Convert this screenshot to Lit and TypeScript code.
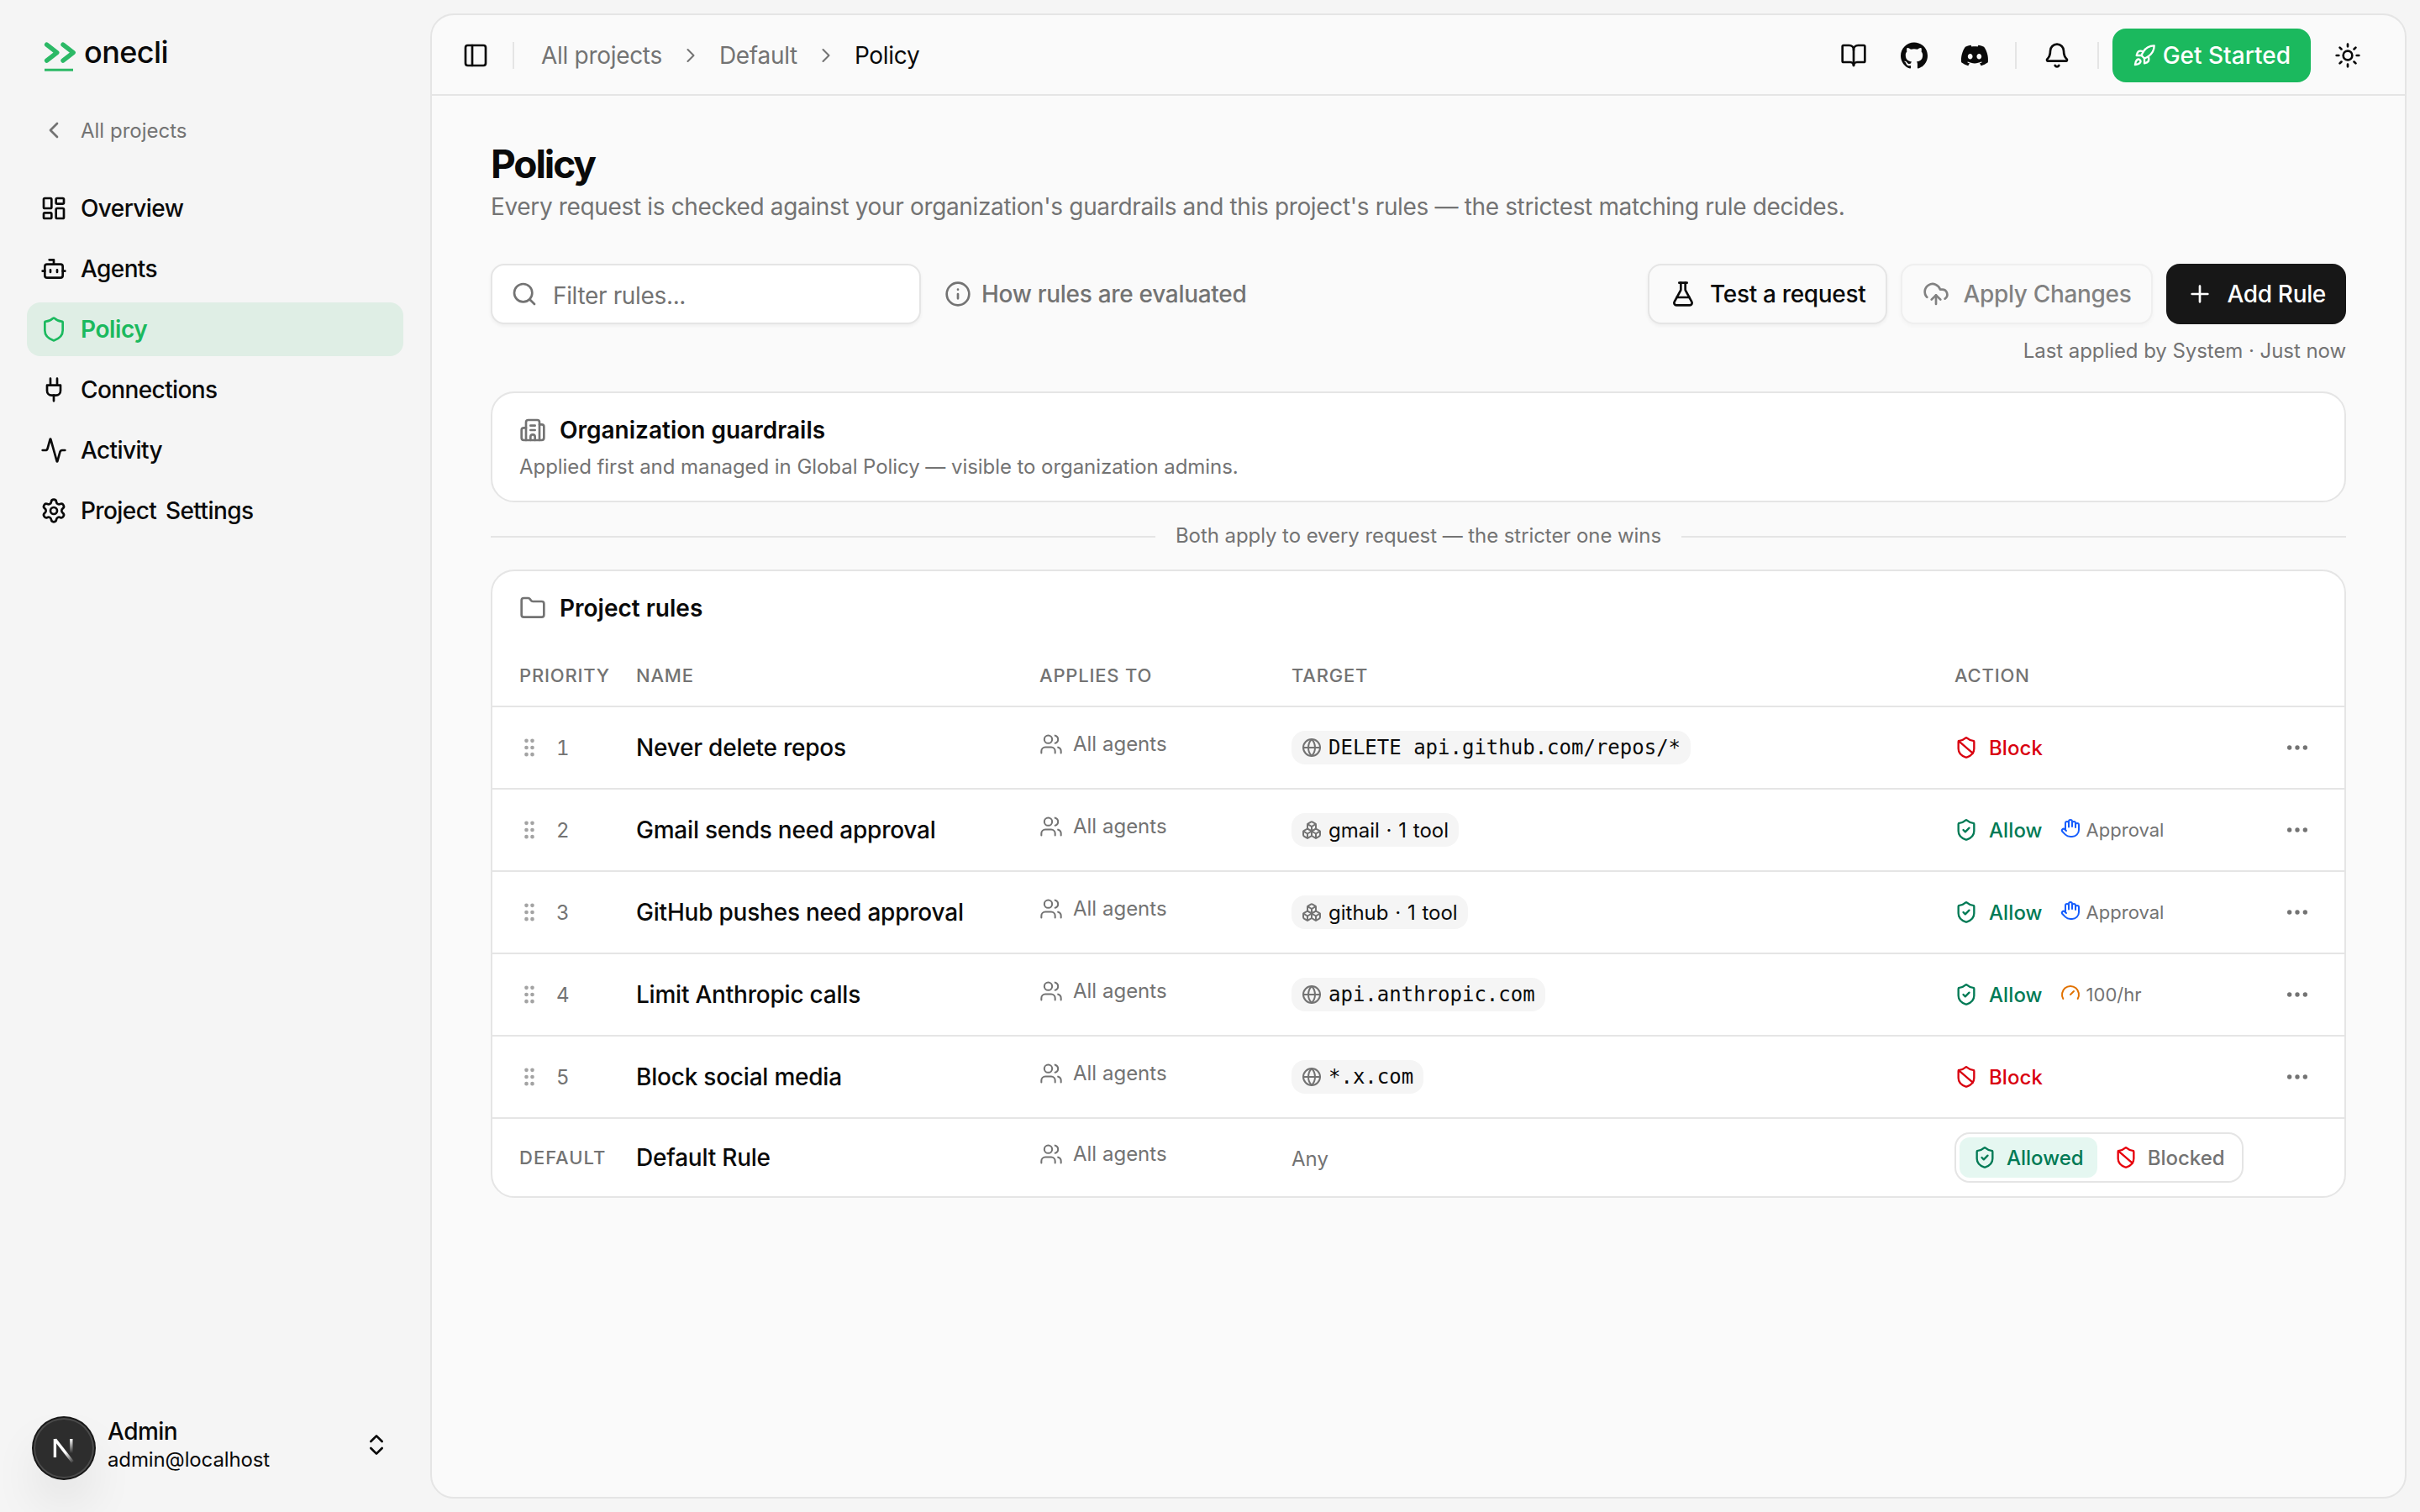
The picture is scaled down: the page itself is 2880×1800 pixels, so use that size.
import { LitElement, html, css, svg, nothing } from 'lit';
import { customElement, property } from 'lit/decorators.js';

const SHIELD = svg`<path d="M20 13c0 5-3.5 7.5-7.66 8.95a1 1 0 0 1-.67-.01C7.5 20.5 4 18 4 13V6a1 1 0 0 1 1-1c2 0 4.5-1.2 6.24-2.72a1.17 1.17 0 0 1 1.52 0C14.51 3.81 17 5 19 5a1 1 0 0 1 1 1z"/>`;

// stroked icons, 24x24 grid
const ICONS: Record<string, unknown> = {
  'chevron-left': svg`<path d="m15 18-6-6 6-6"/>`,
  'chevron-right': svg`<path d="m9 18 6-6-6-6"/>`,
  'chevrons': svg`<path d="m7 15 5 5 5-5"/><path d="m7 9 5-5 5 5"/>`,
  'dashboard': svg`<rect width="7" height="9" x="3" y="3" rx="1"/><rect width="7" height="5" x="14" y="3" rx="1"/><rect width="7" height="9" x="14" y="12" rx="1"/><rect width="7" height="5" x="3" y="16" rx="1"/>`,
  'bot': svg`<path d="M12 8V4H8"/><rect width="16" height="12" x="4" y="8" rx="2"/><path d="M2 14h2M20 14h2M15 13v2M9 13v2"/>`,
  'shield': SHIELD,
  'shield-ban': svg`${SHIELD}<path d="m4.243 5.21 14.39 12.472"/>`,
  'shield-check': svg`${SHIELD}<path d="m9 12 2 2 4-4"/>`,
  'plug': svg`<path d="M12 22v-5M9 8V2M15 8V2"/><path d="M18 8v5a4 4 0 0 1-4 4h-4a4 4 0 0 1-4-4V8Z"/>`,
  'activity': svg`<path d="M22 12h-2.48a2 2 0 0 0-1.93 1.46l-2.35 8.36a.25.25 0 0 1-.48 0L9.24 2.18a.25.25 0 0 0-.48 0l-2.35 8.36A2 2 0 0 1 4.49 12H2"/>`,
  'settings': svg`<path d="M9.671 4.136a2.34 2.34 0 0 1 4.659 0 2.34 2.34 0 0 0 3.319 1.915 2.34 2.34 0 0 1 2.33 4.033 2.34 2.34 0 0 0 0 3.831 2.34 2.34 0 0 1-2.33 4.033 2.34 2.34 0 0 0-3.319 1.915 2.34 2.34 0 0 1-4.659 0 2.34 2.34 0 0 0-3.32-1.915 2.34 2.34 0 0 1-2.33-4.033 2.34 2.34 0 0 0 0-3.831A2.34 2.34 0 0 1 6.35 6.051a2.34 2.34 0 0 0 3.319-1.915"/><circle cx="12" cy="12" r="3"/>`,
  'panel': svg`<rect width="18" height="18" x="3" y="3" rx="2"/><path d="M9 3v18"/>`,
  'book': svg`<path d="M12 7v14"/><path d="M3 18a1 1 0 0 1-1-1V4a1 1 0 0 1 1-1h5a4 4 0 0 1 4 4 4 4 0 0 1 4-4h5a1 1 0 0 1 1 1v13a1 1 0 0 1-1 1h-6a3 3 0 0 0-3 3 3 3 0 0 0-3-3z"/>`,
  'bell': svg`<path d="M10.268 21a2 2 0 0 0 3.464 0"/><path d="M3.262 15.326A1 1 0 0 0 4 17h16a1 1 0 0 0 .74-1.673C19.41 13.956 18 12.499 18 8A6 6 0 0 0 6 8c0 4.499-1.411 5.956-2.738 7.326"/>`,
  'rocket': svg`<path d="M4.5 16.5c-1.5 1.26-2 5-2 5s3.74-.5 5-2c.71-.84.7-2.13-.09-2.91a2.18 2.18 0 0 0-2.91-.09z"/><path d="m12 15-3-3a22 22 0 0 1 2-3.95A12.88 12.88 0 0 1 22 2c0 2.72-.78 7.5-6 11a22.35 22.35 0 0 1-4 2z"/><path d="M9 12H4s.55-3.03 2-4c1.62-1.08 5 0 5 0"/><path d="M12 15v5s3.03-.55 4-2c1.08-1.62 0-5 0-5"/>`,
  'sun': svg`<circle cx="12" cy="12" r="4"/><path d="M12 2v2M12 20v2M4.93 4.93l1.41 1.41M17.66 17.66l1.41 1.41M2 12h2M20 12h2M6.34 17.66l-1.41 1.41M19.07 4.93l-1.41 1.41"/>`,
  'search': svg`<path d="m21 21-4.34-4.34"/><circle cx="11" cy="11" r="8"/>`,
  'info': svg`<circle cx="12" cy="12" r="10"/><path d="M12 16v-4M12 8h.01"/>`,
  'flask': svg`<path d="M14 2v6a2 2 0 0 0 .245.96l5.51 10.08A2 2 0 0 1 18 22H6a2 2 0 0 1-1.755-2.96l5.51-10.08A2 2 0 0 0 10 8V2"/><path d="M6.453 15h11.094M8.5 2h7"/>`,
  'cloud-up': svg`<path d="M12 13v8"/><path d="M4 14.899A7 7 0 1 1 15.71 8h1.79a4.5 4.5 0 0 1 2.5 8.242"/><path d="m8 17 4-4 4 4"/>`,
  'plus': svg`<path d="M5 12h14M12 5v14"/>`,
  'building': svg`<path d="M10 12h4M10 8h4"/><path d="M14 21v-3a2 2 0 0 0-4 0v3"/><path d="M6 10H4a2 2 0 0 0-2 2v7a2 2 0 0 0 2 2h16a2 2 0 0 0 2-2V9a2 2 0 0 0-2-2h-2"/><path d="M6 21V5a2 2 0 0 1 2-2h8a2 2 0 0 1 2 2v16"/>`,
  'folder': svg`<path d="M20 20a2 2 0 0 0 2-2V8a2 2 0 0 0-2-2h-7.9a2 2 0 0 1-1.69-.9L9.6 3.9A2 2 0 0 0 7.93 3H4a2 2 0 0 0-2 2v13a2 2 0 0 0 2 2Z"/>`,
  'grip': svg`<circle cx="9" cy="12" r="1"/><circle cx="9" cy="5" r="1"/><circle cx="9" cy="19" r="1"/><circle cx="15" cy="12" r="1"/><circle cx="15" cy="5" r="1"/><circle cx="15" cy="19" r="1"/>`,
  'users': svg`<path d="M16 21v-2a4 4 0 0 0-4-4H6a4 4 0 0 0-4 4v2"/><path d="M16 3.128a4 4 0 0 1 0 7.744"/><path d="M22 21v-2a4 4 0 0 0-3-3.87"/><circle cx="9" cy="7" r="4"/>`,
  'globe': svg`<circle cx="12" cy="12" r="10"/><path d="M12 2a14.5 14.5 0 0 0 0 20 14.5 14.5 0 0 0 0-20"/><path d="M2 12h20"/>`,
  'boxes': svg`<path d="M2.97 12.92A2 2 0 0 0 2 14.63v3.24a2 2 0 0 0 .97 1.71l3 1.8a2 2 0 0 0 2.06 0L12 19v-5.5l-5-3-4.03 2.42Z"/><path d="m7 16.5-4.74-2.85M7 16.5l5-3M7 16.5v5.17"/><path d="M12 13.5V19l3.97 2.38a2 2 0 0 0 2.06 0l3-1.8a2 2 0 0 0 .97-1.71v-3.24a2 2 0 0 0-.97-1.71L17 10.5l-5 3Z"/><path d="m17 16.5-5-3M17 16.5l4.74-2.85M17 16.5v5.17"/><path d="M7.97 4.42A2 2 0 0 0 7 6.13v4.37l5 3 5-3V6.13a2 2 0 0 0-.97-1.71l-3-1.8a2 2 0 0 0-2.06 0l-3 1.8Z"/><path d="M12 8 7.26 5.15M12 8l4.74-2.85M12 13.5V8"/>`,
  'hand': svg`<path d="M18 11V6a2 2 0 0 0-2-2a2 2 0 0 0-2 2"/><path d="M14 10V4a2 2 0 0 0-2-2a2 2 0 0 0-2 2v2"/><path d="M10 10.5V6a2 2 0 0 0-2-2a2 2 0 0 0-2 2v8"/><path d="M18 8a2 2 0 1 1 4 0v6a8 8 0 0 1-8 8h-2c-2.8 0-4.5-.86-5.99-2.34l-3.6-3.6a2 2 0 0 1 2.83-2.82L7 15"/>`,
  'gauge': svg`<path d="m12 14 4-4"/><path d="M3.34 19a10 10 0 1 1 17.32 0"/>`,
  'dots': svg`<circle cx="12" cy="12" r="1"/><circle cx="19" cy="12" r="1"/><circle cx="5" cy="12" r="1"/>`,
};

// filled brand marks
const BRANDS: Record<string, unknown> = {
  'github': svg`<path d="M12 .297c-6.63 0-12 5.373-12 12 0 5.303 3.438 9.8 8.205 11.385.6.113.82-.258.82-.577 0-.285-.01-1.04-.015-2.04-3.338.724-4.042-1.61-4.042-1.61C4.422 18.07 3.633 17.7 3.633 17.7c-1.087-.744.084-.729.084-.729 1.205.084 1.838 1.236 1.838 1.236 1.07 1.835 2.809 1.305 3.495.998.108-.776.417-1.305.76-1.605-2.665-.3-5.466-1.332-5.466-5.93 0-1.31.465-2.38 1.235-3.22-.135-.303-.54-1.523.105-3.176 0 0 1.005-.322 3.3 1.23.96-.267 1.98-.399 3-.405 1.02.006 2.04.138 3 .405 2.28-1.552 3.285-1.23 3.285-1.23.645 1.653.24 2.873.12 3.176.765.84 1.23 1.91 1.23 3.22 0 4.61-2.805 5.625-5.475 5.92.42.36.81 1.096.81 2.22 0 1.606-.015 2.896-.015 3.286 0 .315.21.69.825.57C20.565 22.092 24 17.592 24 12.297c0-6.627-5.373-12-12-12"/>`,
  'discord': svg`<path d="M20.317 4.3698a19.7913 19.7913 0 00-4.8851-1.5152.0741.0741 0 00-.0785.0371c-.211.3753-.4447.8648-.6083 1.2495-1.8447-.2762-3.68-.2762-5.4868 0-.1636-.3933-.4058-.8742-.6177-1.2495a.077.077 0 00-.0785-.037 19.7363 19.7363 0 00-4.8852 1.515.0699.0699 0 00-.0321.0277C.5334 9.0458-.319 13.5799.0992 18.0578a.0824.0824 0 00.0312.0561c2.0528 1.5076 4.0413 2.4228 5.9929 3.0294a.0777.0777 0 00.0842-.0276c.4616-.6304.8731-1.2952 1.226-1.9942a.076.076 0 00-.0416-.1057c-.6528-.2476-1.2743-.5495-1.8722-.8923a.077.077 0 01-.0076-.1277c.1258-.0943.2517-.1923.3718-.2914a.0743.0743 0 01.0776-.0105c3.9278 1.7933 8.18 1.7933 12.0614 0a.0739.0739 0 01.0785.0095c.1202.099.246.1981.3728.2924a.077.077 0 01-.0066.1276 12.2986 12.2986 0 01-1.873.8914.0766.0766 0 00-.0407.1067c.3604.698.7719 1.3628 1.225 1.9932a.076.076 0 00.0842.0286c1.961-.6067 3.9495-1.5219 6.0023-3.0294a.077.077 0 00.0313-.0552c.5004-5.177-.8382-9.6739-3.5485-13.6604a.061.061 0 00-.0312-.0286zM8.02 15.3312c-1.1825 0-2.1569-1.0857-2.1569-2.419 0-1.3332.9555-2.4189 2.157-2.4189 1.2108 0 2.1757 1.0952 2.1568 2.419 0 1.3332-.9555 2.4189-2.1569 2.4189zm7.9748 0c-1.1825 0-2.1569-1.0857-2.1569-2.419 0-1.3332.9554-2.4189 2.1569-2.4189 1.2108 0 2.1757 1.0952 2.1568 2.419 0 1.3332-.946 2.4189-2.1568 2.4189Z"/>`,
};

@customElement('ui-icon')
export class UiIcon extends LitElement {
  static styles = css`
    :host { display: inline-flex; flex: none; width: 32px; height: 32px; }
    svg { width: 100%; height: 100%; overflow: visible; }
    .line { fill: none; stroke: currentColor; stroke-width: var(--stroke, 2); stroke-linecap: round; stroke-linejoin: round; }
    .solid { fill: currentColor; }
  `;

  @property() name = '';

  render() {
    const brand = BRANDS[this.name];
    return brand
      ? html`<svg class="solid" viewBox="0 0 24 24">${brand}</svg>`
      : html`<svg class="line" viewBox="0 0 24 24">${ICONS[this.name]}</svg>`;
  }
}

const NAV = [
  { icon: 'dashboard', label: 'Overview' },
  { icon: 'bot', label: 'Agents' },
  { icon: 'shield', label: 'Policy', active: true },
  { icon: 'plug', label: 'Connections' },
  { icon: 'activity', label: 'Activity' },
  { icon: 'settings', label: 'Project Settings' },
];

@customElement('side-bar')
export class SideBar extends LitElement {
  static styles = css`
    :host { display: flex; flex-direction: column; width: 512px; flex: none; box-sizing: border-box; padding: 0 32px; }
    .brand { display: flex; align-items: flex-start; gap: 9px; padding: 48px 0 0 20px; height: 75px; }
    .brand svg { width: 39px; height: 38px; }
    .word { font-size: 36px; line-height: 28px; font-weight: 500; letter-spacing: -0.6px; color: #0a0a0a; }
    .back { display: flex; align-items: center; gap: 16px; height: 64px; padding: 0 16px; font-size: 24px; color: #737373; }
    nav { display: flex; flex-direction: column; gap: 8px; margin-top: 29px; }
    .item { display: flex; align-items: center; gap: 16px; height: 64px; padding: 0 16px; border-radius: 16px; font-size: 28px; font-weight: 500; letter-spacing: -0.6px; word-spacing: 4px; color: #0a0a0a; }
    .item.active { background: #dfeee5; color: #1bb95e; font-weight: 600; letter-spacing: -0.4px; }
    .user { display: flex; align-items: center; margin-top: auto; margin-bottom: 32px; height: 96px; padding: 0 16px 0 96px; }
    .who { flex: 1; }
    .name { font-size: 28px; line-height: 36px; font-weight: 500; letter-spacing: -0.5px; }
    .mail { font-size: 24px; line-height: 32px; letter-spacing: -0.12px; }
  `;

  render() {
    return html`
      <div class="brand">
        <svg viewBox="0 0 39 38" fill="none" stroke="#2cb966" stroke-linecap="round" stroke-linejoin="round">
          <path stroke-width="5.4" d="M3.6 5.2 15.8 14.6 3.6 24.2M23 5.2 35.2 14.6 23 24.2"/>
          <path stroke-width="3" stroke-linecap="butt" d="M1 35.3h34"/>
        </svg>
        <span class="word">onecli</span>
      </div>
      <div class="back"><ui-icon name="chevron-left"></ui-icon>All projects</div>
      <nav>
        ${NAV.map(n => html`
          <div class="item ${n.active ? 'active' : ''}"><ui-icon name=${n.icon}></ui-icon>${n.label}</div>
        `)}
      </nav>
      <div class="user">
        <div class="who">
          <div class="name">Admin</div>
          <div class="mail">admin@localhost</div>
        </div>
        <ui-icon name="chevrons"></ui-icon>
      </div>
    `;
  }
}

@customElement('top-bar')
export class TopBar extends LitElement {
  static styles = css`
    :host { display: flex; align-items: center; height: 92px; padding: 2px 36px 0; border-bottom: 2px solid #e5e5e5; font-size: 28px; }
    .sep { width: 2px; height: 32px; background: #e5e5e5; }
    .crumbs { display: flex; align-items: center; color: #737373; margin-left: 32px; letter-spacing: -0.3px; }
    .crumbs ui-icon { width: 28px; height: 28px; margin: 0 20px; --stroke: 1.75; }
    .here { color: #0a0a0a; }
    .toggle { margin-right: 28px; }
    .right { display: flex; align-items: center; margin-left: auto; }
    .btn { display: flex; align-items: center; justify-content: center; width: 64px; height: 64px; margin-left: 8px; }
    .gap { margin: 0 16px; }
    .gap + .btn { margin-left: 0; }
    .start { display: flex; align-items: center; gap: 8px; height: 64px; padding: 0 24px; margin-right: 4px; border-radius: 16px; background: #1bb95e; color: #fff; font-weight: 500; }
    .start ui-icon { width: 28px; height: 28px; }
  `;

  render() {
    return html`
      <ui-icon class="toggle" name="panel"></ui-icon>
      <div class="sep"></div>
      <div class="crumbs">
        <span>All projects</span><ui-icon name="chevron-right"></ui-icon>
        <span>Default</span><ui-icon name="chevron-right"></ui-icon>
        <span class="here">Policy</span>
      </div>
      <div class="right">
        <div class="btn"><ui-icon name="book"></ui-icon></div>
        <div class="btn"><ui-icon name="github"></ui-icon></div>
        <div class="btn"><ui-icon name="discord"></ui-icon></div>
        <div class="sep gap"></div>
        <div class="btn"><ui-icon name="bell"></ui-icon></div>
        <div class="sep gap"></div>
        <div class="start"><ui-icon name="rocket"></ui-icon><span>Get Started</span></div>
        <div class="btn"><ui-icon name="sun"></ui-icon></div>
      </div>
    `;
  }
}

interface Rule {
  name: string;
  target: string;
  kind: 'host' | 'tool';
  block?: boolean;
  extra?: 'hand' | 'gauge';
  note?: string;
}

const RULES: Rule[] = [
  { name: 'Never delete repos', target: 'DELETE api.github.com/repos/*', kind: 'host', block: true },
  { name: 'Gmail sends need approval', target: 'gmail · 1 tool', kind: 'tool', extra: 'hand', note: 'Approval' },
  { name: 'GitHub pushes need approval', target: 'github · 1 tool', kind: 'tool', extra: 'hand', note: 'Approval' },
  { name: 'Limit Anthropic calls', target: 'api.anthropic.com', kind: 'host', extra: 'gauge', note: '100/hr' },
  { name: 'Block social media', target: '*.x.com', kind: 'host', block: true },
];

@customElement('rule-table')
export class RuleTable extends LitElement {
  static styles = css`
    :host { display: block; }
    .row { display: grid; grid-template-columns: 139px 480px 300px 789px 1fr; align-items: center; height: 96px; padding: 0 24px 0 32px; border-bottom: 2px solid #e5e5e5; }
    .head { height: 72px; font-size: 22px; font-weight: 500; letter-spacing: 0.8px; color: #737373; text-transform: uppercase; }
    .row.default { height: 92px; border-bottom: none; }
    .prio { display: flex; align-items: center; gap: 18px; font-size: 24px; font-variant-numeric: tabular-nums; color: #737373; }
    .prio ui-icon { width: 28px; height: 28px; margin-left: -2px; color: #a3a3a3; }
    .tag { font-size: 22px; font-weight: 500; letter-spacing: 1px; color: #737373; }
    .name { font-size: 28px; font-weight: 500; letter-spacing: -0.22px; color: #0a0a0a; }
    .agents { display: flex; align-items: center; gap: 12px; font-size: 24px; color: #737373; padding-bottom: 9px; }
    .agents ui-icon { width: 28px; height: 28px; --stroke: 1.75; }
    .chip { display: inline-flex; align-items: center; gap: 8px; height: 40px; padding: 0 12px; border-radius: 16px; background: #f5f5f5; font-size: 24px; word-spacing: 1px; color: #0a0a0a; }
    .chip ui-icon { width: 24px; height: 24px; color: #737373; }
    .chip.host { font-family: "DejaVu Sans Mono", monospace; word-spacing: 0; }
    .any { font-size: 24px; color: #737373; padding-top: 3px; }
    .action { display: flex; align-items: center; }
    .verdict { display: flex; align-items: center; gap: 13px; font-size: 24px; font-weight: 500; letter-spacing: 0.1px; color: #007a55; }
    .verdict ui-icon { width: 28px; height: 28px; }
    .verdict.block { color: #d9000f; }
    .note { display: flex; align-items: center; gap: 7px; margin-left: 21px; font-size: 22px; color: #737373; }
    .note ui-icon { width: 24px; height: 24px; margin-bottom: 4px; }
    .hand { color: #155dfc; }
    .gauge { color: #e17100; }
    .more { width: 64px; height: 32px; display: flex; justify-content: center; margin-left: auto; color: #737373; }
    .switch { display: inline-flex; gap: 4px; border: 2px solid #e5e5e5; border-radius: 18px; padding: 4px; width: max-content; }
    .opt { display: flex; align-items: center; gap: 12px; height: 48px; padding: 0 16px; border-radius: 12px; font-size: 24px; font-weight: 500; color: #737373; }
    .opt ui-icon { width: 28px; height: 28px; }
    .opt.on { background: #e5f7f1; color: #007a55; }
    .red { color: #e7000b; }
  `;

  row(r: Rule, i: number) {
    return html`
      <div class="row">
        <div class="prio"><ui-icon name="grip"></ui-icon><span>${i + 1}</span></div>
        <div class="name">${r.name}</div>
        <div class="agents"><ui-icon name="users"></ui-icon><span>All agents</span></div>
        <div><span class="chip ${r.kind}"><ui-icon name=${r.kind === 'host' ? 'globe' : 'boxes'}></ui-icon><span>${r.target}</span></span></div>
        <div class="action">
          <div class="verdict ${r.block ? 'block' : ''}">
            <ui-icon name=${r.block ? 'shield-ban' : 'shield-check'}></ui-icon>
            <span>${r.block ? 'Block' : 'Allow'}</span>
          </div>
          ${r.extra ? html`
            <div class="note"><ui-icon class=${r.extra} name=${r.extra}></ui-icon><span>${r.note}</span></div>
          ` : nothing}
          <div class="more"><ui-icon name="dots"></ui-icon></div>
        </div>
      </div>
    `;
  }

  render() {
    return html`
      <div class="row head">
        <span>Priority</span><span>Name</span><span>Applies to</span><span>Target</span><span>Action</span>
      </div>
      ${RULES.map((r, i) => this.row(r, i))}
      <div class="row default">
        <div class="tag">DEFAULT</div>
        <div class="name">Default Rule</div>
        <div class="agents"><ui-icon name="users"></ui-icon><span>All agents</span></div>
        <div class="any">Any</div>
        <div class="switch">
          <div class="opt on"><ui-icon name="shield-check"></ui-icon><span>Allowed</span></div>
          <div class="opt"><ui-icon class="red" name="shield-ban"></ui-icon><span>Blocked</span></div>
        </div>
      </div>
    `;
  }
}

@customElement('app-root')
export class AppRoot extends LitElement {
  static styles = css`
    :host { display: flex; position: relative; width: 2880px; height: 1800px; overflow: hidden; background: #f5f5f5; color: #0a0a0a; font-family: Inter, "Liberation Sans", sans-serif; }
    .panel { flex: 1; display: flex; flex-direction: column; margin: 16px 16px 16px 0; background: #fafafa; border: 2px solid #e5e5e5; border-radius: 28px; }
    .content { display: flex; flex-direction: column; padding: 50px 70px 0; }
    h1 { margin: 0; font-size: 46px; line-height: 62px; font-weight: 700; letter-spacing: -2.1px; }
    .lead { font-size: 28px; line-height: 40px; letter-spacing: -0.35px; color: #737373; }
    .tools { display: flex; align-items: center; gap: 16px; margin-top: 48px; }
    .filter { display: flex; align-items: center; gap: 18px; box-sizing: border-box; width: 512px; height: 72px; padding: 0 22px; border: 2px solid #e5e5e5; border-radius: 16px; background: #fff; font-size: 28px; letter-spacing: -0.35px; color: #737373; box-shadow: 0 2px 4px rgba(0, 0, 0, 0.05); }
    .filter span { padding-top: 3px; }
    .how { display: flex; align-items: center; gap: 12px; margin: 0 auto 0 12px; font-size: 28px; font-weight: 500; color: #737373; letter-spacing: -0.3px; }
    .btn { display: flex; align-items: center; gap: 16px; box-sizing: border-box; height: 72px; padding: 0 24px; border: 2px solid #e5e5e5; border-radius: 16px; background: #fafafa; font-size: 28px; font-weight: 500; letter-spacing: -0.33px; box-shadow: 0 2px 4px rgba(0, 0, 0, 0.05); }
    .btn.off { opacity: 0.5; }
    .btn.dark { border: none; background: #171717; color: #fff; box-shadow: none; }
    .applied { align-self: flex-end; margin-top: 16px; font-size: 24px; line-height: 32px; letter-spacing: -0.06px; color: #737373; }
    .card { border: 2px solid #e5e5e5; border-radius: 28px; background: #fff; }
    .org { box-sizing: border-box; height: 132px; margin-top: 32px; padding: 24px 32px; }
    .title { display: flex; align-items: center; gap: 16px; height: 40px; font-size: 28px; font-weight: 600; }
    .title ui-icon { color: #737373; }
    .sub { margin-top: 8px; font-size: 24px; line-height: 32px; letter-spacing: -0.06px; color: #737373; }
    .between { display: flex; align-items: center; gap: 24px; height: 32px; margin: 23px 0 25px; font-size: 24px; letter-spacing: -0.07px; color: #737373; }
    .between i { flex: 1; height: 2px; background: #e5e5e5; margin-top: 4px; }
    .rules .title { padding: 24px 32px 24px; }
    .badge { position: absolute; left: 40px; bottom: 40px; width: 72px; height: 72px; border-radius: 50%; background: #2d2d2d; box-shadow: 0 0 0 2px #171717, inset 0 0 0 2px rgba(255, 255, 255, 0.14), 0 32px 64px -16px rgba(0, 0, 0, 0.24); }
  `;

  render() {
    return html`
      <side-bar></side-bar>
      <main class="panel">
        <top-bar></top-bar>
        <div class="content">
          <h1>Policy</h1>
          <div class="lead">Every request is checked against your organization's guardrails and this project's rules — the strictest matching rule decides.</div>
          <div class="tools">
            <div class="filter"><ui-icon name="search"></ui-icon><span>Filter rules...</span></div>
            <div class="how"><ui-icon name="info"></ui-icon><span>How rules are evaluated</span></div>
            <div class="btn"><ui-icon name="flask"></ui-icon><span>Test a request</span></div>
            <div class="btn off"><ui-icon name="cloud-up"></ui-icon><span>Apply Changes</span></div>
            <div class="btn dark"><ui-icon name="plus"></ui-icon><span>Add Rule</span></div>
          </div>
          <div class="applied">Last applied by System · Just now</div>
          <section class="card org">
            <div class="title"><ui-icon name="building"></ui-icon><span>Organization guardrails</span></div>
            <div class="sub">Applied first and managed in Global Policy — visible to organization admins.</div>
          </section>
          <div class="between"><i></i><span>Both apply to every request — the stricter one wins</span><i></i></div>
          <section class="card rules">
            <div class="title"><ui-icon name="folder"></ui-icon><span>Project rules</span></div>
            <rule-table></rule-table>
          </section>
        </div>
      </main>
      <div class="badge">
        <svg width="72" height="72" viewBox="0 0 72 72" fill="none" stroke-width="3.4">
          <defs>
            <linearGradient id="diag" gradientUnits="userSpaceOnUse" x1="38" y1="41" x2="48" y2="53">
              <stop stop-color="#fff"/><stop offset="1" stop-color="#fff" stop-opacity="0"/>
            </linearGradient>
            <linearGradient id="stem" gradientUnits="userSpaceOnUse" x1="0" y1="25" x2="0" y2="42">
              <stop stop-color="#fff"/><stop offset="1" stop-color="#fff" stop-opacity="0"/>
            </linearGradient>
          </defs>
          <path stroke="#fff" d="M25.4 47V25"/>
          <path stroke="url(#diag)" d="M25.6 25.6 46.4 52.4"/>
          <path stroke="url(#stem)" d="M44.8 25v17"/>
        </svg>
      </div>
    `;
  }
}
